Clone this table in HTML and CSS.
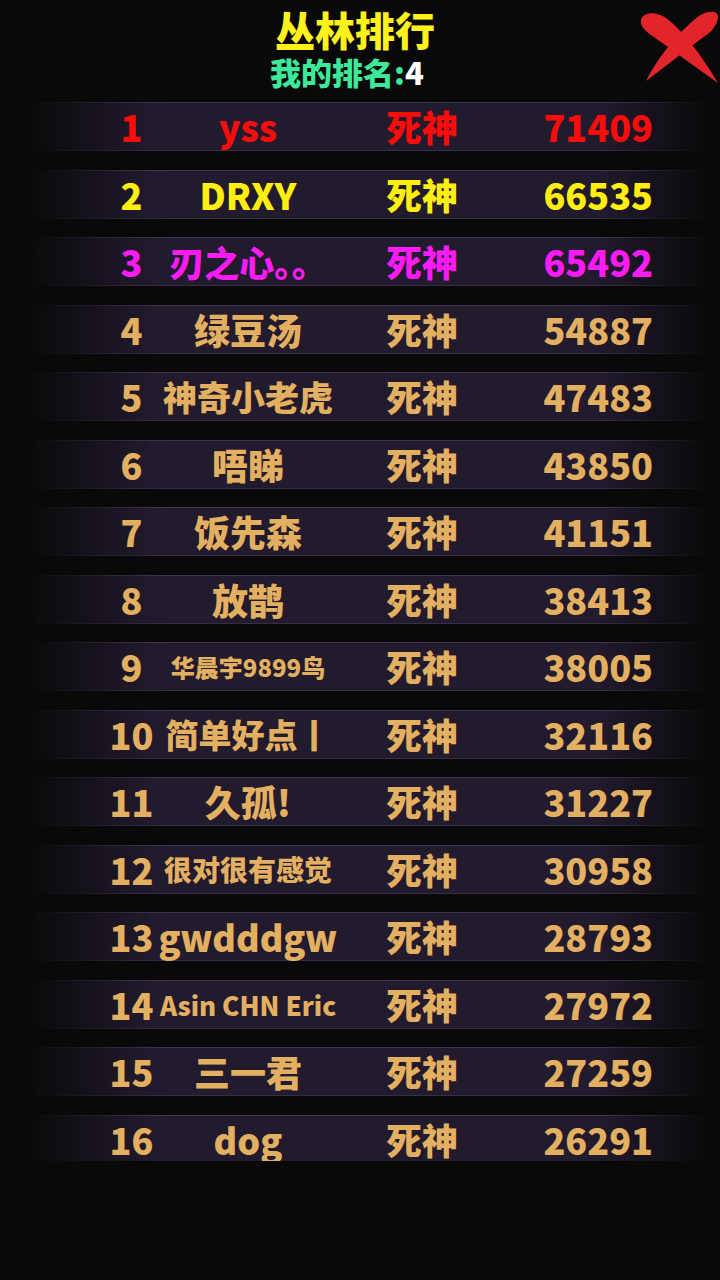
FILE: index.html
```html
<!DOCTYPE html>
<html lang="zh-CN">
<head>
  <meta charset="UTF-8">
  <title>丛林排行</title>
  <link rel="stylesheet" href="styles.css">
</head>
<body>

<div class="close-btn">
  <svg viewBox="0 0 80 76" width="80" height="76">
    <path d="M2,12 C4,4 16,3 27,10 C42,21 62,46 79,75 C58,60 32,41 12,27 C5,22 1,17 2,12 Z" fill="#e1252b"/>
    <path d="M79,10 C80,2 69,2 60,8 C44,20 22,44 7,73 C27,58 52,38 70,25 C75,21 78,15 79,10 Z" fill="#e1252b"/>
  </svg>
</div>

<div class="header">
  <h1 class="title">丛林排行</h1>
  <div class="my-rank">我的排名:<span class="my-rank-num">4</span></div>
</div>

<div class="list">
  <div class="row first">
    <span class="rank">1</span><span class="name">yss</span><span class="job">死神</span><span class="score">71409</span>
  </div>
  <div class="row second">
    <span class="rank">2</span><span class="name">DRXY</span><span class="job">死神</span><span class="score">66535</span>
  </div>
  <div class="row third">
    <span class="rank">3</span><span class="name n-lg">刃之心。。</span><span class="job">死神</span><span class="score">65492</span>
  </div>
  <div class="row">
    <span class="rank">4</span><span class="name">绿豆汤</span><span class="job">死神</span><span class="score">54887</span>
  </div>
  <div class="row">
    <span class="rank">5</span><span class="name n-md">神奇小老虎</span><span class="job">死神</span><span class="score">47483</span>
  </div>
  <div class="row">
    <span class="rank">6</span><span class="name">唔睇</span><span class="job">死神</span><span class="score">43850</span>
  </div>
  <div class="row">
    <span class="rank">7</span><span class="name">饭先森</span><span class="job">死神</span><span class="score">41151</span>
  </div>
  <div class="row">
    <span class="rank">8</span><span class="name">放鹊</span><span class="job">死神</span><span class="score">38413</span>
  </div>
  <div class="row">
    <span class="rank">9</span><span class="name n-xs">华晨宇9899鸟</span><span class="job">死神</span><span class="score">38005</span>
  </div>
  <div class="row">
    <span class="rank">10</span><span class="name n-sm">简单好点丨</span><span class="job">死神</span><span class="score">32116</span>
  </div>
  <div class="row">
    <span class="rank">11</span><span class="name">久孤!</span><span class="job">死神</span><span class="score">31227</span>
  </div>
  <div class="row">
    <span class="rank">12</span><span class="name n-s">很对很有感觉</span><span class="job">死神</span><span class="score">30958</span>
  </div>
  <div class="row">
    <span class="rank">13</span><span class="name">gwdddgw</span><span class="job">死神</span><span class="score">28793</span>
  </div>
  <div class="row">
    <span class="rank">14</span><span class="name n-en">Asin CHN Eric</span><span class="job">死神</span><span class="score">27972</span>
  </div>
  <div class="row">
    <span class="rank">15</span><span class="name">三一君</span><span class="job">死神</span><span class="score">27259</span>
  </div>
  <div class="row">
    <span class="rank">16</span><span class="name">dog</span><span class="job">死神</span><span class="score">26291</span>
  </div>
</div>

</body>
</html>
```

FILE: styles.css
```css
body {
  margin: 0;
  background: #090909;
  font-family: "Noto Sans CJK SC", "Noto Sans", sans-serif;
  font-weight: 900;
  color: #e3b062;
  height: 1280px;
  overflow: hidden;
}

.close-btn {
  position: absolute;
  top: 8px;
  right: 1px;
  width: 80px;
  height: 76px;
}

.header {
  display: flex;
  flex-direction: column;
  align-items: center;
  padding-top: 6px;
  padding-right: 10px;
}

.title {
  margin: 0;
  font-size: 40px;
  line-height: 46px;
  font-weight: 900;
  color: #fff21c;
}

.my-rank {
  margin-top: 3px;
  font-size: 31px;
  line-height: 34px;
  font-weight: 900;
  color: #3ee89a;
  margin-right: 16px;
}

.my-rank-num {
  color: #fff;
}

.list {
  margin-top: 9px;
  padding-top: 4px;
  height: 1063px;
  box-sizing: border-box;
  overflow: hidden;
  display: flex;
  flex-direction: column;
  gap: 18.5px;
}

.row {
  flex: none;
  margin-left: 20px;
  width: 690px;
  height: 49px;
  padding-left: 80px;
  box-sizing: border-box;
  display: grid;
  grid-template-columns: 63px 170px 178px 142px;
  align-items: center;
  background:
    linear-gradient(to right, rgba(110, 95, 130, 0) 2%, rgba(110, 95, 130, 0.4) 22%, rgba(110, 95, 130, 0.4) 84%, rgba(110, 95, 130, 0) 100%) top / 100% 1px no-repeat,
    linear-gradient(to right, rgba(110, 95, 130, 0) 2%, rgba(110, 95, 130, 0.28) 22%, rgba(110, 95, 130, 0.28) 84%, rgba(110, 95, 130, 0) 100%) bottom / 100% 1px no-repeat,
    linear-gradient(to right, rgba(34, 26, 45, 0) 1%, #221a2d 19%, #221a2d 84%, rgba(34, 26, 45, 0) 100%);
  font-size: 36px;
  line-height: 47px;
  white-space: nowrap;
}

.rank {
  text-align: center;
}

.name {
  display: flex;
  justify-content: center;
}

.n-lg { font-size: 35px; }
.n-md { font-size: 34px; }
.n-sm { font-size: 33px; }
.n-s { font-size: 28px; }
.n-en { font-size: 26px; }
.n-xs { font-size: 24px; }

.job {
  text-align: center;
}

.score {
  text-align: right;
}

.first { color: #f80c0c; }
.second { color: #ffee10; }
.third { color: #fb1cf4; }
```
